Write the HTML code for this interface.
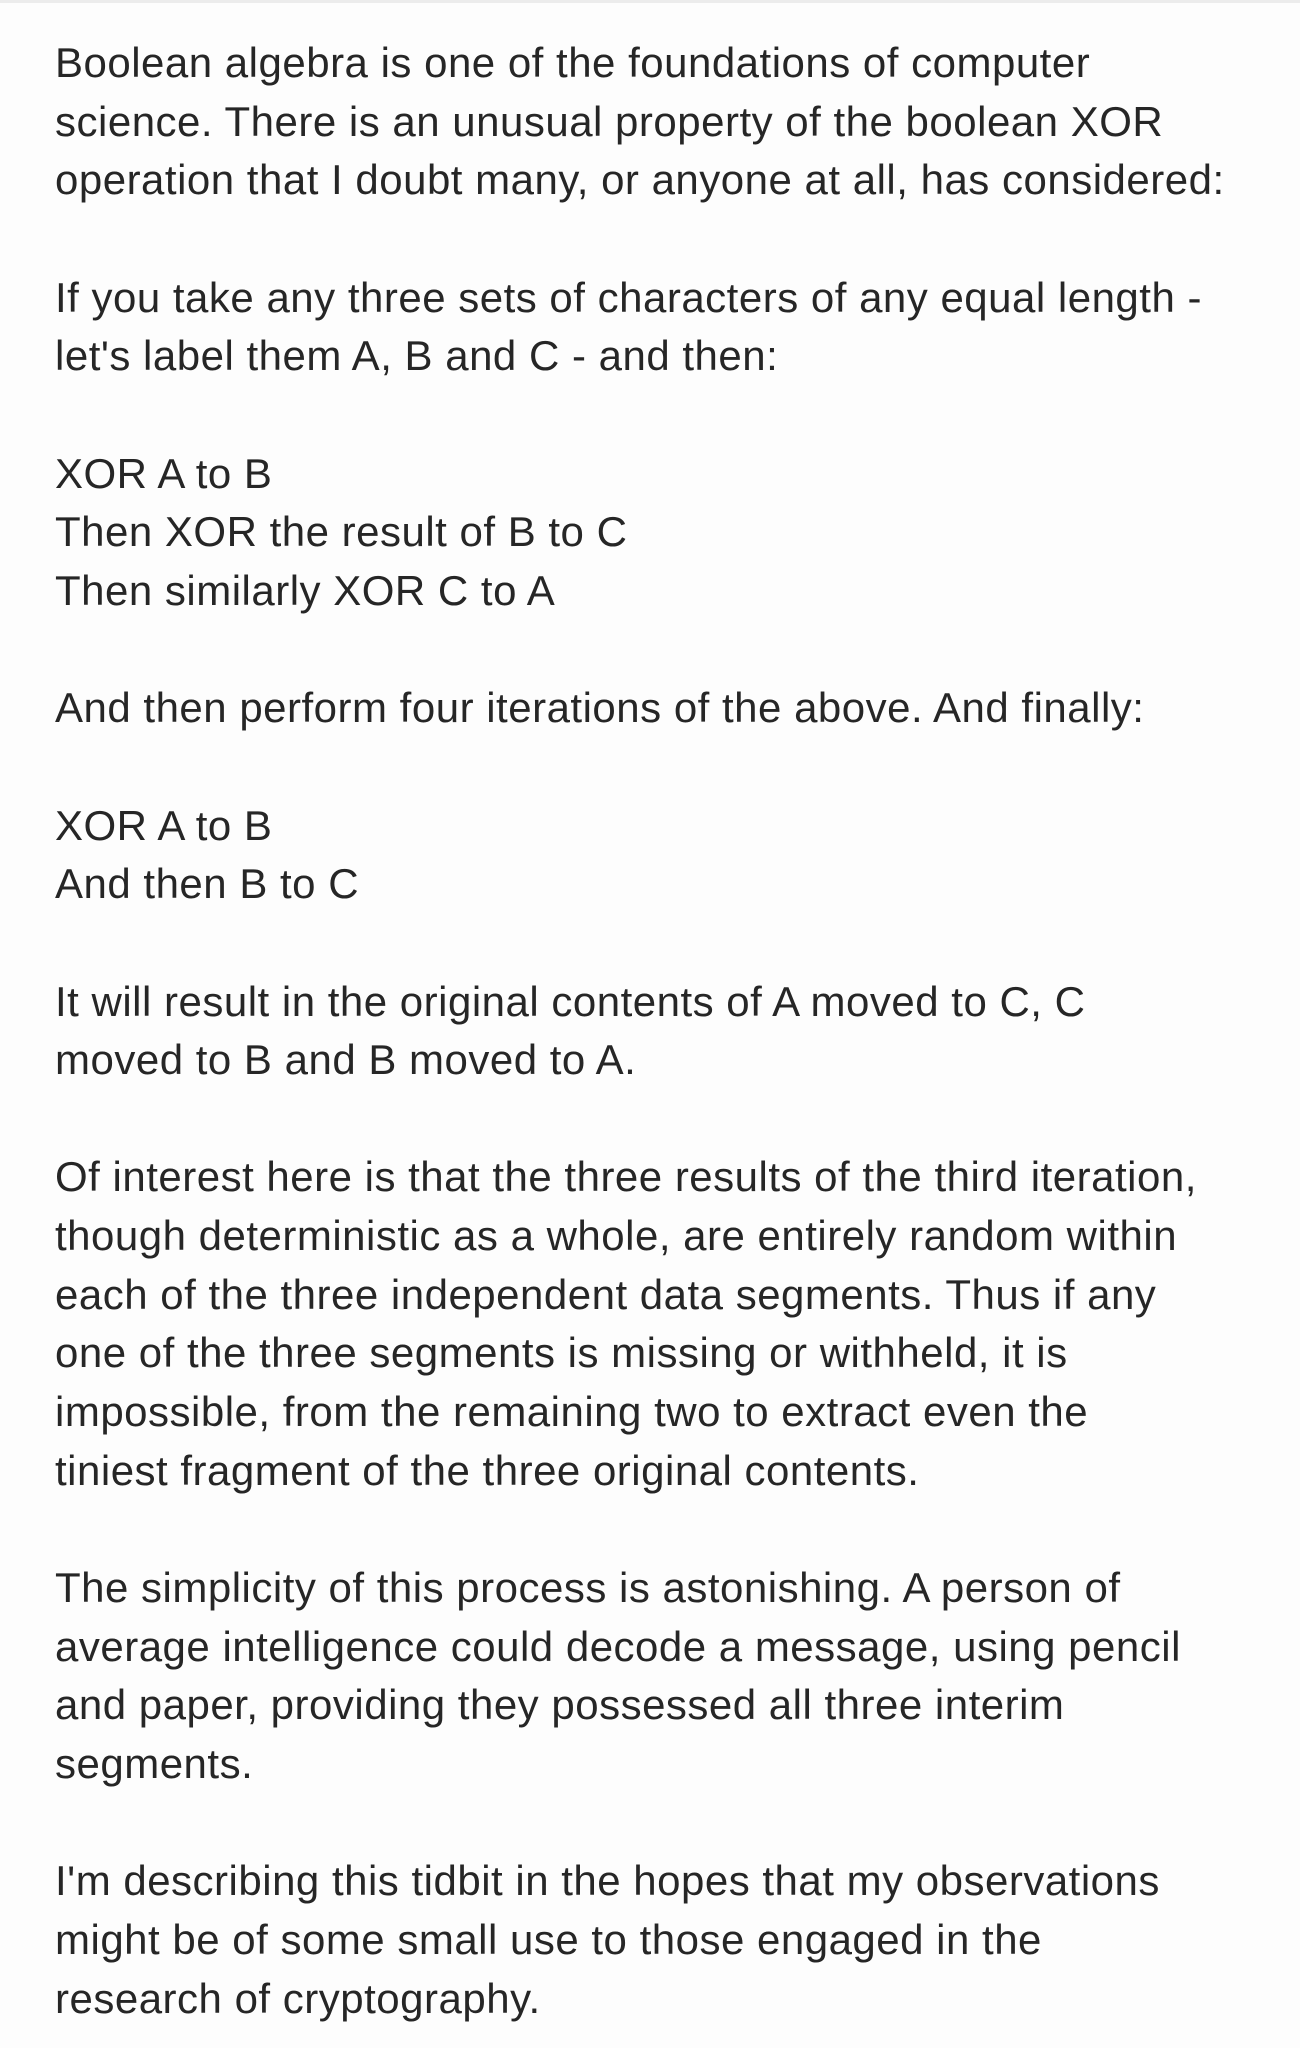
<!DOCTYPE html>
<html><head><meta charset="utf-8"><style>
html,body{margin:0;padding:0;background:#fdfdfd;}
body{width:1300px;height:2048px;overflow:hidden;border-top:3px solid #ececec;box-sizing:border-box;}
.t{position:absolute;left:55px;top:34px;font-family:"Liberation Sans",sans-serif;font-size:42px;line-height:58.65px;color:#262626;letter-spacing:0.5px;white-space:nowrap;}
</style></head><body>
<div class="t">Boolean algebra is one of the foundations of computer<br>science. There is an unusual property of the boolean XOR<br>operation that I doubt many, or anyone at all, has considered:<br><br>If you take any three sets of characters of any equal length -<br>let's label them A, B and C - and then:<br><br>XOR A to B<br>Then XOR the result of B to C<br>Then similarly XOR C to A<br><br>And then perform four iterations of the above. And finally:<br><br>XOR A to B<br>And then B to C<br><br>It will result in the original contents of A moved to C, C<br>moved to B and B moved to A.<br><br>Of interest here is that the three results of the third iteration,<br>though deterministic as a whole, are entirely random within<br>each of the three independent data segments. Thus if any<br>one of the three segments is missing or withheld, it is<br>impossible, from the remaining two to extract even the<br>tiniest fragment of the three original contents.<br><br>The simplicity of this process is astonishing. A person of<br>average intelligence could decode a message, using pencil<br>and paper, providing they possessed all three interim<br>segments.<br><br>I'm describing this tidbit in the hopes that my observations<br>might be of some small use to those engaged in the<br>research of cryptography.</div>
</body></html>
